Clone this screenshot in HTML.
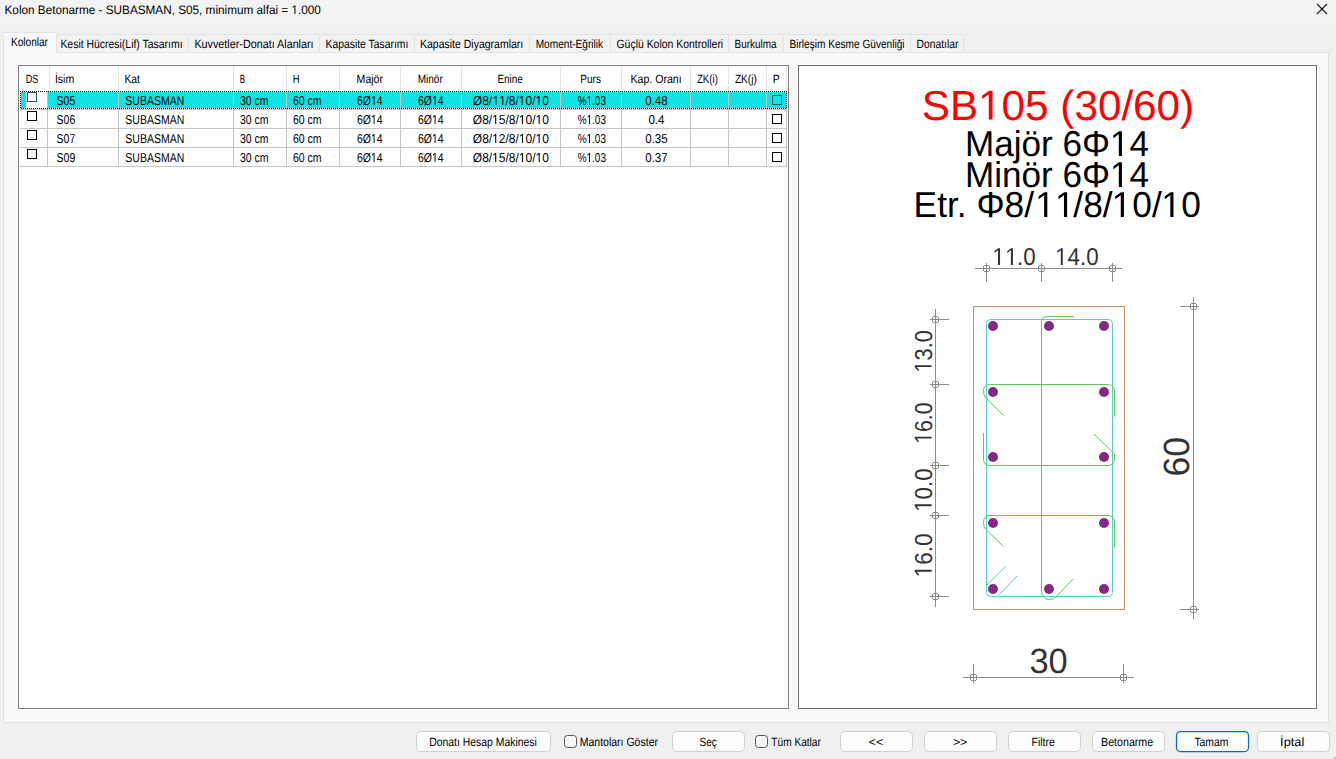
<!DOCTYPE html>
<html><head><meta charset="utf-8"><title>Kolon Betonarme</title>
<style>
html,body{margin:0;padding:0;width:1336px;height:759px;overflow:hidden;background:#f0f0f0;}
svg{display:block;font-family:"Liberation Sans",sans-serif;}
</style></head><body>
<svg width="1336" height="759" viewBox="0 0 1336 759" text-rendering="geometricPrecision">
<rect x="0" y="0" width="1336" height="759" fill="#f0f0f0"/>
<rect x="0" y="0" width="1336" height="25" fill="#f3f3f3"/>
<g stroke="#1a1a1a" stroke-width="1.1">
<line x1="1317" y1="4" x2="1327" y2="14"/><line x1="1327" y1="4" x2="1317" y2="14"/>
</g>
<!-- tab panel -->
<rect x="3.5" y="52.5" width="1325" height="670" fill="#f9f9f9" stroke="#e3e3e3"/>
<!-- unselected tabs -->
<g fill="#f2f2f2" stroke="#e3e3e3">
<rect x="56.5" y="34.5" width="132" height="18"/>
<rect x="188.5" y="34.5" width="131" height="18"/>
<rect x="319.5" y="34.5" width="95" height="18"/>
<rect x="414.5" y="34.5" width="115" height="18"/>
<rect x="529.5" y="34.5" width="81" height="18"/>
<rect x="610.5" y="34.5" width="118" height="18"/>
<rect x="728.5" y="34.5" width="55" height="18"/>
<rect x="783.5" y="34.5" width="127" height="18"/>
<rect x="910.5" y="34.5" width="53" height="18"/>
</g>
<!-- selected tab -->
<path d="M3.5 53 V32.5 H56.5 V53" fill="#f9f9f9" stroke="#e3e3e3"/>
<rect x="4" y="52" width="52" height="2" fill="#f9f9f9"/>
<!-- table -->
<rect x="17.5" y="64.5" width="772" height="645" fill="none" stroke="#ffffff"/>
<rect x="18.5" y="65.5" width="770" height="643" fill="#ffffff" stroke="#7b808a"/>
<!-- header separators -->
<g stroke="#e3e3e3">
<line x1="49.5" y1="66" x2="49.5" y2="90"/>
<line x1="118.5" y1="66" x2="118.5" y2="90"/>
<line x1="233.5" y1="66" x2="233.5" y2="90"/>
<line x1="286.5" y1="66" x2="286.5" y2="90"/>
<line x1="339.5" y1="66" x2="339.5" y2="90"/>
<line x1="400.5" y1="66" x2="400.5" y2="90"/>
<line x1="461.5" y1="66" x2="461.5" y2="90"/>
<line x1="560.5" y1="66" x2="560.5" y2="90"/>
<line x1="621.5" y1="66" x2="621.5" y2="90"/>
<line x1="690.5" y1="66" x2="690.5" y2="90"/>
<line x1="728.5" y1="66" x2="728.5" y2="90"/>
<line x1="766.5" y1="66" x2="766.5" y2="90"/>
<line x1="786.5" y1="66" x2="786.5" y2="90"/>
</g>
<!-- selected row fill -->
<rect x="21" y="92" width="765" height="16" fill="#10e3e3"/>
<rect x="26" y="92" width="21" height="16" fill="#ffffff"/>
<!-- body grid -->
<g stroke="#c6c6c6">
<line x1="47.5" y1="91" x2="47.5" y2="167"/>
<line x1="118.5" y1="91" x2="118.5" y2="167"/>
<line x1="233.5" y1="91" x2="233.5" y2="167"/>
<line x1="286.5" y1="91" x2="286.5" y2="167"/>
<line x1="339.5" y1="91" x2="339.5" y2="167"/>
<line x1="400.5" y1="91" x2="400.5" y2="167"/>
<line x1="461.5" y1="91" x2="461.5" y2="167"/>
<line x1="560.5" y1="91" x2="560.5" y2="167"/>
<line x1="621.5" y1="91" x2="621.5" y2="167"/>
<line x1="690.5" y1="91" x2="690.5" y2="167"/>
<line x1="728.5" y1="91" x2="728.5" y2="167"/>
<line x1="766.5" y1="91" x2="766.5" y2="167"/>
<line x1="786.5" y1="91" x2="786.5" y2="167"/>
<line x1="20" y1="109.5" x2="787" y2="109.5"/>
<line x1="20" y1="128.5" x2="787" y2="128.5"/>
<line x1="20" y1="147.5" x2="787" y2="147.5"/>
<line x1="20" y1="166.5" x2="787" y2="166.5"/>
</g>
<!-- focus dotted rect -->
<defs><pattern id="dots" x="0" y="0" width="2" height="2" patternUnits="userSpaceOnUse"><rect x="0" y="1" width="1" height="1" fill="#000"/><rect x="1" y="0" width="1" height="1" fill="#000"/></pattern></defs>
<g fill="url(#dots)" shape-rendering="crispEdges">
<rect x="20" y="91" width="767" height="1"/><rect x="20" y="108" width="767" height="1"/>
<rect x="20" y="91" width="1" height="18"/><rect x="786" y="91" width="1" height="18"/>
</g>
<!-- checkboxes -->
<g fill="none" stroke-width="1">
<rect x="27.5" y="92.5" width="9" height="9" stroke="#1f6060"/>
<rect x="27.5" y="111.5" width="9" height="9" stroke="#000"/>
<rect x="27.5" y="130.5" width="9" height="9" stroke="#000"/>
<rect x="27.5" y="149.5" width="9" height="9" stroke="#000"/>
<rect x="772.5" y="95.5" width="9" height="9" stroke="#1f6060"/>
<rect x="772.5" y="114.5" width="9" height="9" stroke="#000"/>
<rect x="772.5" y="133.5" width="9" height="9" stroke="#000"/>
<rect x="772.5" y="152.5" width="9" height="9" stroke="#000"/>
</g>
<!-- drawing panel -->
<rect x="797.5" y="64.5" width="520" height="645" fill="none" stroke="#ffffff"/>
<rect x="798.5" y="65.5" width="518" height="643" fill="#ffffff" stroke="#6e6e6e"/>
<!-- section -->
<rect x="973.5" y="306.5" width="151" height="303" fill="none" stroke="#c98f5d"/>
<rect x="986.5" y="319.5" width="126" height="277" rx="4" fill="none" stroke="#5ccbcc"/>
<g fill="none" stroke="#5cc95c">
<path d="M1074 316.5 H1047 Q1041.5 316.5 1041.5 322 V590 Q1041.5 599.5 1049 599.5 Q1054 599.5 1057 596 L1073 579"/>
<path d="M1003.5 415.5 L986 398 Q983.5 395 983.5 391 Q983.5 384.5 990 384.5 H1107 Q1114.5 384.5 1114.5 392 V416.5"/>
<path d="M983.5 433 V459 Q983.5 465.5 990 465.5 H1108 Q1114.5 465.5 1114.5 458 V454 L1094 434"/>
<path d="M1003.5 546.5 L986 529.5 Q983.5 527 983.5 523 Q983.5 515.5 990 515.5 H1107 Q1114.5 515.5 1114.5 522 V547.5"/>
</g>
<g fill="none" stroke="#5ccbcc">
<path d="M987 585 L1006 566"/>
<path d="M999 595 L1017 576"/>
</g>
<g fill="#812a84">
<circle cx="993" cy="326" r="5"/><circle cx="1049" cy="326" r="5"/><circle cx="1104" cy="326" r="5"/>
<circle cx="993" cy="392" r="5"/><circle cx="1104" cy="392" r="5"/>
<circle cx="993" cy="457" r="5"/><circle cx="1104" cy="457" r="5"/>
<circle cx="993" cy="523" r="5"/><circle cx="1104" cy="523" r="5"/>
<circle cx="993" cy="589" r="5"/><circle cx="1049" cy="589" r="5"/><circle cx="1104" cy="589" r="5"/>
</g>
<!-- dimension lines -->
<g fill="none" stroke="#8c8c8c" shape-rendering="crispEdges">
<line x1="975" y1="268.5" x2="1122" y2="268.5"/>
<line x1="986.5" y1="263" x2="986.5" y2="282"/>
<line x1="1041.5" y1="263" x2="1041.5" y2="282"/>
<line x1="1112.5" y1="263" x2="1112.5" y2="282"/>
<circle cx="986.5" cy="268.5" r="3.4"/><circle cx="1041.5" cy="268.5" r="3.4"/><circle cx="1112.5" cy="268.5" r="3.4"/>
<line x1="935.5" y1="309" x2="935.5" y2="607"/>
<line x1="930" y1="319.5" x2="949" y2="319.5"/>
<line x1="930" y1="384.5" x2="949" y2="384.5"/>
<line x1="930" y1="465.5" x2="949" y2="465.5"/>
<line x1="930" y1="515.5" x2="949" y2="515.5"/>
<line x1="930" y1="596.5" x2="949" y2="596.5"/>
<circle cx="935.5" cy="319.5" r="3.4"/><circle cx="935.5" cy="384.5" r="3.4"/><circle cx="935.5" cy="465.5" r="3.4"/><circle cx="935.5" cy="515.5" r="3.4"/><circle cx="935.5" cy="596.5" r="3.4"/>
<line x1="1193.5" y1="297" x2="1193.5" y2="619"/>
<line x1="1180" y1="306.5" x2="1199" y2="306.5"/>
<line x1="1180" y1="609.5" x2="1199" y2="609.5"/>
<circle cx="1193.5" cy="306.5" r="3.4"/><circle cx="1193.5" cy="609.5" r="3.4"/>
<line x1="963" y1="677.5" x2="1134" y2="677.5"/>
<line x1="973.5" y1="664" x2="973.5" y2="683"/>
<line x1="1123.5" y1="664" x2="1123.5" y2="683"/>
<circle cx="973.5" cy="677.5" r="3.4"/><circle cx="1123.5" cy="677.5" r="3.4"/>
</g>
<!-- buttons -->
<g fill="#fdfdfd" stroke="#d0d0d0">
<rect x="416.5" y="731.5" width="134" height="20" rx="4"/>
<rect x="672.5" y="731.5" width="72" height="20" rx="4"/>
<rect x="840.5" y="731.5" width="72" height="20" rx="4"/>
<rect x="924.5" y="731.5" width="72" height="20" rx="4"/>
<rect x="1008.5" y="731.5" width="72" height="20" rx="4"/>
<rect x="1092.5" y="731.5" width="72" height="20" rx="4"/>
<rect x="1257.5" y="731.5" width="72" height="20" rx="4"/>
</g>
<rect x="1176.5" y="731.5" width="72" height="20" rx="4" fill="#fdfdfd" stroke="#0a6cc8" stroke-width="1.25"/>
<g fill="#f7f7f7" stroke="#555" stroke-width="1">
<rect x="564.5" y="735.5" width="12" height="12" rx="3"/>
<rect x="755.5" y="735.5" width="12" height="12" rx="3"/>
</g>
<path d="M1336 756.5 L1336 759 L1333.5 759 Z" fill="#a8a8a8"/>

<text x="4.54" y="14" font-size="12.3" fill="#000" textLength="316.30" lengthAdjust="spacingAndGlyphs">Kolon Betonarme - SUBASMAN, S05, minimum alfai =  .000</text>
<path d="M515 0L515 1237L197 1010L197 1180L530 1409L696 1409L696 0Z" fill="#000" transform="translate(291.453 14) scale(0.00574 -0.00601)"/>
<text x="10.90" y="46" font-size="12" fill="#000" textLength="37.10" lengthAdjust="spacingAndGlyphs">Kolonlar</text>
<text x="60.40" y="48" font-size="12" fill="#000" textLength="122.19" lengthAdjust="spacingAndGlyphs">Kesit Hücresi(Lif) Tasarımı</text>
<text x="194.40" y="48" font-size="12" fill="#000" textLength="119.20" lengthAdjust="spacingAndGlyphs">Kuvvetler-Donatı Alanları</text>
<text x="325.50" y="48" font-size="12" fill="#000" textLength="82.89" lengthAdjust="spacingAndGlyphs">Kapasite Tasarımı</text>
<text x="420.00" y="48" font-size="12" fill="#000" textLength="103.29" lengthAdjust="spacingAndGlyphs">Kapasite Diyagramları</text>
<text x="535.70" y="48" font-size="12" fill="#000" textLength="67.46" lengthAdjust="spacingAndGlyphs">Moment-Eğrilik</text>
<text x="616.50" y="48" font-size="12" fill="#000" textLength="106.68" lengthAdjust="spacingAndGlyphs">Güçlü Kolon Kontrolleri</text>
<text x="734.60" y="48" font-size="12" fill="#000" textLength="41.93" lengthAdjust="spacingAndGlyphs">Burkulma</text>
<text x="789.50" y="48" font-size="12" fill="#000" textLength="115.06" lengthAdjust="spacingAndGlyphs">Birleşim Kesme Güvenliği</text>
<text x="916.60" y="48" font-size="12" fill="#000" textLength="41.80" lengthAdjust="spacingAndGlyphs">Donatılar</text>
<text x="25.70" y="83" font-size="12" fill="#000" textLength="12.60" lengthAdjust="spacingAndGlyphs">DS</text>
<text x="54.92" y="83" font-size="12" fill="#000" textLength="19.27" lengthAdjust="spacingAndGlyphs">İsim</text>
<text x="124.40" y="83" font-size="12" fill="#000" textLength="15.53" lengthAdjust="spacingAndGlyphs">Kat</text>
<text x="239.70" y="83" font-size="12" fill="#000" textLength="5.30" lengthAdjust="spacingAndGlyphs">B</text>
<text x="292.70" y="83" font-size="12" fill="#000" textLength="6.82" lengthAdjust="spacingAndGlyphs">H</text>
<text x="356.60" y="83" font-size="12" fill="#000" textLength="26.40" lengthAdjust="spacingAndGlyphs">Majör</text>
<text x="417.70" y="83" font-size="12" fill="#000" textLength="25.10" lengthAdjust="spacingAndGlyphs">Minör</text>
<text x="497.40" y="83" font-size="12" fill="#000" textLength="25.43" lengthAdjust="spacingAndGlyphs">Enine</text>
<text x="580.30" y="83" font-size="12" fill="#000" textLength="20.60" lengthAdjust="spacingAndGlyphs">Purs</text>
<text x="630.50" y="83" font-size="12" fill="#000" textLength="51.19" lengthAdjust="spacingAndGlyphs">Kap. Oranı</text>
<text x="696.90" y="83" font-size="12" fill="#000" textLength="21.00" lengthAdjust="spacingAndGlyphs">ZK(i)</text>
<text x="734.90" y="83" font-size="12" fill="#000" textLength="21.90" lengthAdjust="spacingAndGlyphs">ZK(j)</text>
<text x="772.70" y="83" font-size="12" fill="#000" textLength="7.10" lengthAdjust="spacingAndGlyphs">P</text>
<text x="56.50" y="105" font-size="12.9" fill="#000" textLength="18.74" lengthAdjust="spacingAndGlyphs">S05</text>
<text x="125.30" y="105" font-size="12.9" fill="#000" textLength="58.95" lengthAdjust="spacingAndGlyphs">SUBASMAN</text>
<text x="240.00" y="105" font-size="12.9" fill="#000" textLength="28.60" lengthAdjust="spacingAndGlyphs">30 cm</text>
<text x="292.90" y="105" font-size="12.9" fill="#000" textLength="28.70" lengthAdjust="spacingAndGlyphs">60 cm</text>
<text x="357.00" y="105" font-size="12.9" fill="#000" textLength="25.64" lengthAdjust="spacingAndGlyphs">6Ø 4</text>
<path d="M515 0L515 1237L197 1010L197 1180L530 1409L696 1409L696 0Z" fill="#000" transform="translate(370.980 105) scale(0.00512 -0.00630)"/>
<text x="418.00" y="105" font-size="12.9" fill="#000" textLength="25.64" lengthAdjust="spacingAndGlyphs">6Ø 4</text>
<path d="M515 0L515 1237L197 1010L197 1180L530 1409L696 1409L696 0Z" fill="#000" transform="translate(431.980 105) scale(0.00512 -0.00630)"/>
<text x="472.80" y="105" font-size="12.9" fill="#000" textLength="76.16" lengthAdjust="spacingAndGlyphs">Ø8/  /8/ 0/ 0</text>
<path d="M515 0L515 1237L197 1010L197 1180L530 1409L696 1409L696 0Z" fill="#000" transform="translate(492.397 105) scale(0.00594 -0.00630)"/>
<path d="M515 0L515 1237L197 1010L197 1180L530 1409L696 1409L696 0Z" fill="#000" transform="translate(499.158 105) scale(0.00594 -0.00630)"/>
<path d="M515 0L515 1237L197 1010L197 1180L530 1409L696 1409L696 0Z" fill="#000" transform="translate(518.535 105) scale(0.00594 -0.00630)"/>
<path d="M515 0L515 1237L197 1010L197 1180L530 1409L696 1409L696 0Z" fill="#000" transform="translate(535.436 105) scale(0.00594 -0.00630)"/>
<text x="577.70" y="105" font-size="12.9" fill="#000" textLength="28.23" lengthAdjust="spacingAndGlyphs">% .03</text>
<path d="M515 0L515 1237L197 1010L197 1180L530 1409L696 1409L696 0Z" fill="#000" transform="translate(586.553 105) scale(0.00487 -0.00630)"/>
<text x="645.19" y="105" font-size="12.9" fill="#000" textLength="22.58" lengthAdjust="spacingAndGlyphs">0.48</text>
<text x="56.50" y="124" font-size="12.9" fill="#000" textLength="18.74" lengthAdjust="spacingAndGlyphs">S06</text>
<text x="125.30" y="124" font-size="12.9" fill="#000" textLength="58.95" lengthAdjust="spacingAndGlyphs">SUBASMAN</text>
<text x="240.00" y="124" font-size="12.9" fill="#000" textLength="28.60" lengthAdjust="spacingAndGlyphs">30 cm</text>
<text x="292.90" y="124" font-size="12.9" fill="#000" textLength="28.70" lengthAdjust="spacingAndGlyphs">60 cm</text>
<text x="357.00" y="124" font-size="12.9" fill="#000" textLength="25.64" lengthAdjust="spacingAndGlyphs">6Ø 4</text>
<path d="M515 0L515 1237L197 1010L197 1180L530 1409L696 1409L696 0Z" fill="#000" transform="translate(370.980 124) scale(0.00512 -0.00630)"/>
<text x="418.00" y="124" font-size="12.9" fill="#000" textLength="25.64" lengthAdjust="spacingAndGlyphs">6Ø 4</text>
<path d="M515 0L515 1237L197 1010L197 1180L530 1409L696 1409L696 0Z" fill="#000" transform="translate(431.980 124) scale(0.00512 -0.00630)"/>
<text x="472.80" y="124" font-size="12.9" fill="#000" textLength="76.16" lengthAdjust="spacingAndGlyphs">Ø8/ 5/8/ 0/ 0</text>
<path d="M515 0L515 1237L197 1010L197 1180L530 1409L696 1409L696 0Z" fill="#000" transform="translate(492.166 124) scale(0.00587 -0.00630)"/>
<path d="M515 0L515 1237L197 1010L197 1180L530 1409L696 1409L696 0Z" fill="#000" transform="translate(518.890 124) scale(0.00587 -0.00630)"/>
<path d="M515 0L515 1237L197 1010L197 1180L530 1409L696 1409L696 0Z" fill="#000" transform="translate(535.593 124) scale(0.00587 -0.00630)"/>
<text x="577.70" y="124" font-size="12.9" fill="#000" textLength="28.23" lengthAdjust="spacingAndGlyphs">% .03</text>
<path d="M515 0L515 1237L197 1010L197 1180L530 1409L696 1409L696 0Z" fill="#000" transform="translate(586.553 124) scale(0.00487 -0.00630)"/>
<text x="648.41" y="124" font-size="12.9" fill="#000" textLength="16.13" lengthAdjust="spacingAndGlyphs">0.4</text>
<text x="56.50" y="143" font-size="12.9" fill="#000" textLength="18.74" lengthAdjust="spacingAndGlyphs">S07</text>
<text x="125.30" y="143" font-size="12.9" fill="#000" textLength="58.95" lengthAdjust="spacingAndGlyphs">SUBASMAN</text>
<text x="240.00" y="143" font-size="12.9" fill="#000" textLength="28.60" lengthAdjust="spacingAndGlyphs">30 cm</text>
<text x="292.90" y="143" font-size="12.9" fill="#000" textLength="28.70" lengthAdjust="spacingAndGlyphs">60 cm</text>
<text x="357.00" y="143" font-size="12.9" fill="#000" textLength="25.64" lengthAdjust="spacingAndGlyphs">6Ø 4</text>
<path d="M515 0L515 1237L197 1010L197 1180L530 1409L696 1409L696 0Z" fill="#000" transform="translate(370.980 143) scale(0.00512 -0.00630)"/>
<text x="418.00" y="143" font-size="12.9" fill="#000" textLength="25.64" lengthAdjust="spacingAndGlyphs">6Ø 4</text>
<path d="M515 0L515 1237L197 1010L197 1180L530 1409L696 1409L696 0Z" fill="#000" transform="translate(431.980 143) scale(0.00512 -0.00630)"/>
<text x="472.80" y="143" font-size="12.9" fill="#000" textLength="76.16" lengthAdjust="spacingAndGlyphs">Ø8/ 2/8/ 0/ 0</text>
<path d="M515 0L515 1237L197 1010L197 1180L530 1409L696 1409L696 0Z" fill="#000" transform="translate(492.166 143) scale(0.00587 -0.00630)"/>
<path d="M515 0L515 1237L197 1010L197 1180L530 1409L696 1409L696 0Z" fill="#000" transform="translate(518.890 143) scale(0.00587 -0.00630)"/>
<path d="M515 0L515 1237L197 1010L197 1180L530 1409L696 1409L696 0Z" fill="#000" transform="translate(535.593 143) scale(0.00587 -0.00630)"/>
<text x="577.70" y="143" font-size="12.9" fill="#000" textLength="28.23" lengthAdjust="spacingAndGlyphs">% .03</text>
<path d="M515 0L515 1237L197 1010L197 1180L530 1409L696 1409L696 0Z" fill="#000" transform="translate(586.553 143) scale(0.00487 -0.00630)"/>
<text x="645.19" y="143" font-size="12.9" fill="#000" textLength="22.58" lengthAdjust="spacingAndGlyphs">0.35</text>
<text x="56.50" y="162" font-size="12.9" fill="#000" textLength="18.74" lengthAdjust="spacingAndGlyphs">S09</text>
<text x="125.30" y="162" font-size="12.9" fill="#000" textLength="58.95" lengthAdjust="spacingAndGlyphs">SUBASMAN</text>
<text x="240.00" y="162" font-size="12.9" fill="#000" textLength="28.60" lengthAdjust="spacingAndGlyphs">30 cm</text>
<text x="292.90" y="162" font-size="12.9" fill="#000" textLength="28.70" lengthAdjust="spacingAndGlyphs">60 cm</text>
<text x="357.00" y="162" font-size="12.9" fill="#000" textLength="25.64" lengthAdjust="spacingAndGlyphs">6Ø 4</text>
<path d="M515 0L515 1237L197 1010L197 1180L530 1409L696 1409L696 0Z" fill="#000" transform="translate(370.980 162) scale(0.00512 -0.00630)"/>
<text x="418.00" y="162" font-size="12.9" fill="#000" textLength="25.64" lengthAdjust="spacingAndGlyphs">6Ø 4</text>
<path d="M515 0L515 1237L197 1010L197 1180L530 1409L696 1409L696 0Z" fill="#000" transform="translate(431.980 162) scale(0.00512 -0.00630)"/>
<text x="472.80" y="162" font-size="12.9" fill="#000" textLength="76.16" lengthAdjust="spacingAndGlyphs">Ø8/ 5/8/ 0/ 0</text>
<path d="M515 0L515 1237L197 1010L197 1180L530 1409L696 1409L696 0Z" fill="#000" transform="translate(492.166 162) scale(0.00587 -0.00630)"/>
<path d="M515 0L515 1237L197 1010L197 1180L530 1409L696 1409L696 0Z" fill="#000" transform="translate(518.890 162) scale(0.00587 -0.00630)"/>
<path d="M515 0L515 1237L197 1010L197 1180L530 1409L696 1409L696 0Z" fill="#000" transform="translate(535.593 162) scale(0.00587 -0.00630)"/>
<text x="577.70" y="162" font-size="12.9" fill="#000" textLength="28.23" lengthAdjust="spacingAndGlyphs">% .03</text>
<path d="M515 0L515 1237L197 1010L197 1180L530 1409L696 1409L696 0Z" fill="#000" transform="translate(586.553 162) scale(0.00487 -0.00630)"/>
<text x="645.19" y="162" font-size="12.9" fill="#000" textLength="22.58" lengthAdjust="spacingAndGlyphs">0.37</text>
<text x="429.20" y="746" font-size="12" fill="#000" textLength="107.68" lengthAdjust="spacingAndGlyphs">Donatı Hesap Makinesi</text>
<text x="579.70" y="746" font-size="12" fill="#000" textLength="78.30" lengthAdjust="spacingAndGlyphs">Mantoları Göster</text>
<text x="699.50" y="746" font-size="12" fill="#000" textLength="17.20" lengthAdjust="spacingAndGlyphs">Seç</text>
<text x="771.30" y="746" font-size="12" fill="#000" textLength="49.60" lengthAdjust="spacingAndGlyphs">Tüm Katlar</text>
<text x="868.60" y="746" font-size="12" fill="#000" textLength="14.61" lengthAdjust="spacingAndGlyphs">&lt;&lt;</text>
<text x="952.90" y="746" font-size="12" fill="#000" textLength="14.41" lengthAdjust="spacingAndGlyphs">&gt;&gt;</text>
<text x="1031.40" y="746" font-size="12" fill="#000" textLength="23.61" lengthAdjust="spacingAndGlyphs">Filtre</text>
<text x="1101.10" y="746" font-size="12" fill="#000" textLength="52.01" lengthAdjust="spacingAndGlyphs">Betonarme</text>
<text x="1194.40" y="746" font-size="12" fill="#000" textLength="34.00" lengthAdjust="spacingAndGlyphs">Tamam</text>
<text x="1280.13" y="746" font-size="12" fill="#000" textLength="24.18" lengthAdjust="spacingAndGlyphs">İptal</text>
<text x="921.79" y="119.6" font-size="42" fill="#ff0000" textLength="272.40" lengthAdjust="spacingAndGlyphs">SB 05 (30/60)</text>
<path d="M515 0L515 1237L197 1010L197 1180L530 1409L696 1409L696 0Z" fill="#ff0000" transform="translate(978.144 119.6) scale(0.02063 -0.02051)"/>
<text x="965.05" y="156" font-size="36" fill="#000" textLength="183.94" lengthAdjust="spacingAndGlyphs">Majör 6Φ 4</text>
<path d="M515 0L515 1237L197 1010L197 1180L530 1409L696 1409L696 0Z" fill="#000" transform="translate(1109.984 156) scale(0.01713 -0.01758)"/>
<text x="965.05" y="187" font-size="36" fill="#000" textLength="183.94" lengthAdjust="spacingAndGlyphs">Minör 6Φ 4</text>
<path d="M515 0L515 1237L197 1010L197 1180L530 1409L696 1409L696 0Z" fill="#000" transform="translate(1109.984 187) scale(0.01713 -0.01758)"/>
<text x="913.62" y="217" font-size="36" fill="#000" textLength="287.39" lengthAdjust="spacingAndGlyphs">Etr. Φ8/  /8/ 0/ 0</text>
<path d="M515 0L515 1237L197 1010L197 1180L530 1409L696 1409L696 0Z" fill="#000" transform="translate(1035.176 217) scale(0.01741 -0.01758)"/>
<path d="M515 0L515 1237L197 1010L197 1180L530 1409L696 1409L696 0Z" fill="#000" transform="translate(1055.001 217) scale(0.01741 -0.01758)"/>
<path d="M515 0L515 1237L197 1010L197 1180L530 1409L696 1409L696 0Z" fill="#000" transform="translate(1111.811 217) scale(0.01741 -0.01758)"/>
<path d="M515 0L515 1237L197 1010L197 1180L530 1409L696 1409L696 0Z" fill="#000" transform="translate(1161.363 217) scale(0.01741 -0.01758)"/>
<text x="992.15" y="265" font-size="24.5" fill="#333333" textLength="43.44" lengthAdjust="spacingAndGlyphs">  .0</text>
<path d="M515 0L515 1237L197 1010L197 1180L530 1409L696 1409L696 0Z" fill="#333333" transform="translate(992.153 265) scale(0.01133 -0.01196)"/>
<path d="M515 0L515 1237L197 1010L197 1180L530 1409L696 1409L696 0Z" fill="#333333" transform="translate(1005.058 265) scale(0.01133 -0.01196)"/>
<text x="1055.19" y="265" font-size="24.5" fill="#333333" textLength="43.48" lengthAdjust="spacingAndGlyphs"> 4.0</text>
<path d="M515 0L515 1237L197 1010L197 1180L530 1409L696 1409L696 0Z" fill="#333333" transform="translate(1055.188 265) scale(0.01091 -0.01196)"/>
<text x="1029.42" y="673.2" font-size="35" fill="#333333" textLength="38.34" lengthAdjust="spacingAndGlyphs">30</text>
<g transform="translate(931.6 371.7) rotate(-90)"><text x="-0.89" y="0" font-size="24.5" fill="#333333" textLength="42.55" lengthAdjust="spacingAndGlyphs"> 3.0</text>
<path d="M515 0L515 1237L197 1010L197 1180L530 1409L696 1409L696 0Z" fill="#333333" transform="translate(-0.892 0) scale(0.01068 -0.01196)"/>
</g>
<g transform="translate(931.6 443) rotate(-90)"><text x="-0.87" y="0" font-size="24.5" fill="#333333" textLength="41.41" lengthAdjust="spacingAndGlyphs"> 6.0</text>
<path d="M515 0L515 1237L197 1010L197 1180L530 1409L696 1409L696 0Z" fill="#333333" transform="translate(-0.868 0) scale(0.01039 -0.01196)"/>
</g>
<g transform="translate(931.6 511) rotate(-90)"><text x="-0.91" y="0" font-size="24.5" fill="#333333" textLength="43.48" lengthAdjust="spacingAndGlyphs"> 0.0</text>
<path d="M515 0L515 1237L197 1010L197 1180L530 1409L696 1409L696 0Z" fill="#333333" transform="translate(-0.912 0) scale(0.01091 -0.01196)"/>
</g>
<g transform="translate(931.6 576.5) rotate(-90)"><text x="-0.92" y="0" font-size="24.5" fill="#333333" textLength="44.00" lengthAdjust="spacingAndGlyphs"> 6.0</text>
<path d="M515 0L515 1237L197 1010L197 1180L530 1409L696 1409L696 0Z" fill="#333333" transform="translate(-0.923 0) scale(0.01104 -0.01196)"/>
</g>
<g transform="translate(1189 475.5) rotate(-90)"><text x="-0.97" y="0" font-size="36.5" fill="#333333" textLength="39.54" lengthAdjust="spacingAndGlyphs">60</text>
</g>
</svg>
</body></html>
